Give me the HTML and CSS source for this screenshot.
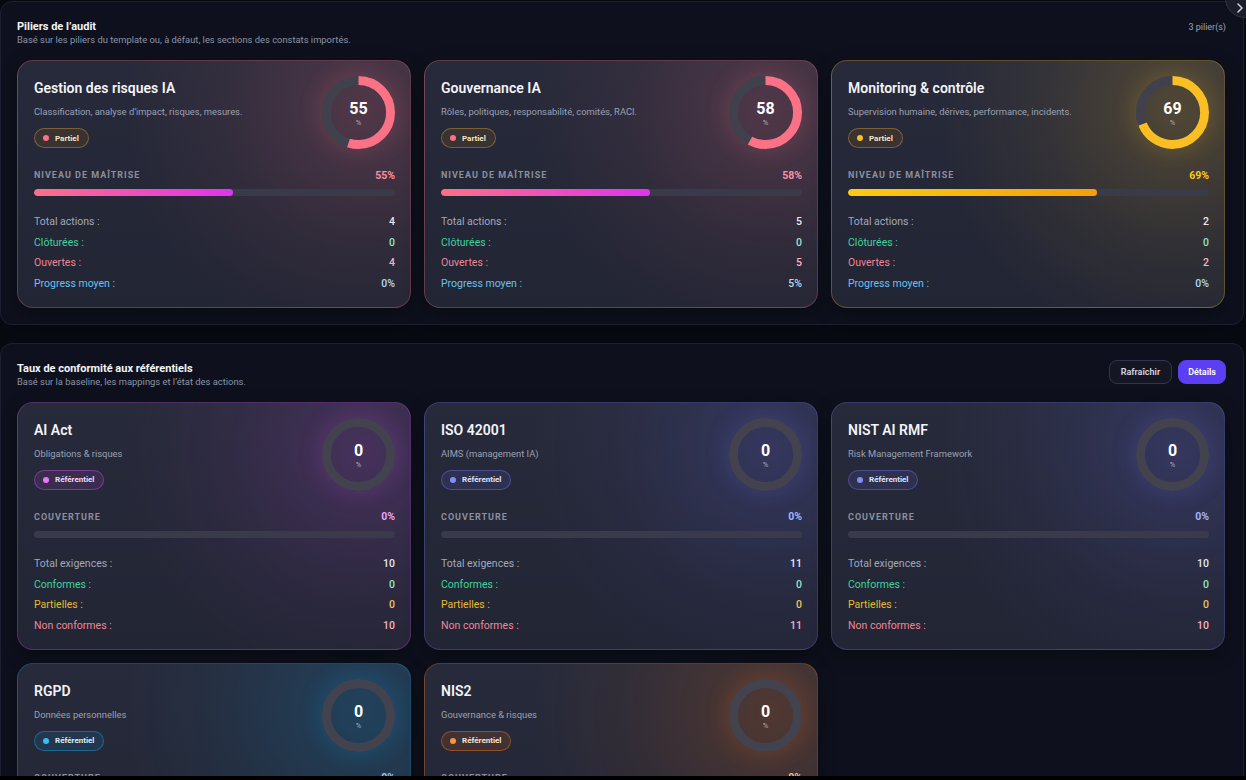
FILE: index.html
```html
<!DOCTYPE html>
<html lang="fr">
<head>
<meta charset="utf-8">
<title>Audit</title>
<link rel="stylesheet" href="styles.css">
</head>
<body>
<div class="viewport">
  <div class="fab"><svg width="10" height="10" viewBox="0 0 10 10"><path d="M3 1 L7 5 L3 9" fill="none" stroke="#c9ccd8" stroke-width="1.6" stroke-linecap="round" stroke-linejoin="round"/></svg></div>

  <section class="panel">
    <header class="panel-head">
      <div>
        <h2 class="panel-title">Piliers de l’audit</h2>
        <p class="panel-sub">Basé sur les piliers du template ou, à défaut, les sections des constats importés.</p>
      </div>
      <span class="panel-count">3 pilier(s)</span>
    </header>
    <div class="grid">
      <article class="card acc-rose">
        <div class="card-head">
          <div class="card-info">
            <h3 class="card-title">Gestion des risques IA</h3>
            <p class="card-desc">Classification, analyse d’impact, risques, mesures.</p>
            <span class="badge badge-partiel"><i class="dot dot-rose"></i>Partiel</span>
          </div>
          <div class="ring">
            <svg viewBox="0 0 74 74"><circle class="track" cx="37" cy="37" r="32.5"/><circle class="arc" cx="37" cy="37" r="32.5" style="stroke-dasharray:112.3 204.2"/></svg>
            <div class="ring-val"><b>55</b><span>%</span></div>
          </div>
        </div>
        <div class="meter-head"><span class="meter-label">Niveau de maîtrise</span><span class="meter-val">55%</span></div>
        <div class="bar"><div class="bar-fill" style="width:55%"></div></div>
        <ul class="stats">
          <li class="st-total"><span>Total actions :</span><b>4</b></li>
          <li class="st-green"><span>Clôturées :</span><b>0</b></li>
          <li class="st-red"><span>Ouvertes :</span><b>4</b></li>
          <li class="st-blue"><span>Progress moyen :</span><b>0%</b></li>
        </ul>
      </article>

      <article class="card acc-rose">
        <div class="card-head">
          <div class="card-info">
            <h3 class="card-title">Gouvernance IA</h3>
            <p class="card-desc">Rôles, politiques, responsabilité, comités, RACI.</p>
            <span class="badge badge-partiel"><i class="dot dot-rose"></i>Partiel</span>
          </div>
          <div class="ring">
            <svg viewBox="0 0 74 74"><circle class="track" cx="37" cy="37" r="32.5"/><circle class="arc" cx="37" cy="37" r="32.5" style="stroke-dasharray:118.4 204.2"/></svg>
            <div class="ring-val"><b>58</b><span>%</span></div>
          </div>
        </div>
        <div class="meter-head"><span class="meter-label">Niveau de maîtrise</span><span class="meter-val">58%</span></div>
        <div class="bar"><div class="bar-fill" style="width:58%"></div></div>
        <ul class="stats">
          <li class="st-total"><span>Total actions :</span><b>5</b></li>
          <li class="st-green"><span>Clôturées :</span><b>0</b></li>
          <li class="st-red"><span>Ouvertes :</span><b>5</b></li>
          <li class="st-blue"><span>Progress moyen :</span><b>5%</b></li>
        </ul>
      </article>

      <article class="card acc-amber">
        <div class="card-head">
          <div class="card-info">
            <h3 class="card-title">Monitoring &amp; contrôle</h3>
            <p class="card-desc">Supervision humaine, dérives, performance, incidents.</p>
            <span class="badge badge-partiel"><i class="dot dot-amber"></i>Partiel</span>
          </div>
          <div class="ring">
            <svg viewBox="0 0 74 74"><circle class="track" cx="37" cy="37" r="32.5"/><circle class="arc" cx="37" cy="37" r="32.5" style="stroke-dasharray:140.9 204.2"/></svg>
            <div class="ring-val"><b>69</b><span>%</span></div>
          </div>
        </div>
        <div class="meter-head"><span class="meter-label">Niveau de maîtrise</span><span class="meter-val">69%</span></div>
        <div class="bar"><div class="bar-fill" style="width:69%"></div></div>
        <ul class="stats">
          <li class="st-total"><span>Total actions :</span><b>2</b></li>
          <li class="st-green"><span>Clôturées :</span><b>0</b></li>
          <li class="st-red"><span>Ouvertes :</span><b>2</b></li>
          <li class="st-blue"><span>Progress moyen :</span><b>0%</b></li>
        </ul>
      </article>
    </div>
  </section>

  <section class="panel">
    <header class="panel-head">
      <div>
        <h2 class="panel-title">Taux de conformité aux référentiels</h2>
        <p class="panel-sub">Basé sur la baseline, les mappings et l’état des actions.</p>
      </div>
      <div class="actions">
        <button class="btn btn-ghost">Rafraîchir</button>
        <button class="btn btn-primary">Détails</button>
      </div>
    </header>
    <div class="grid">
      <article class="card acc-fuchsia">
        <div class="card-head">
          <div class="card-info">
            <h3 class="card-title">AI Act</h3>
            <p class="card-desc">Obligations &amp; risques</p>
            <span class="badge badge-ref"><i class="dot"></i>Référentiel</span>
          </div>
          <div class="ring ring-empty">
            <svg viewBox="0 0 74 74"><circle class="track" cx="37" cy="37" r="32.5"/></svg>
            <div class="ring-val"><b>0</b><span>%</span></div>
          </div>
        </div>
        <div class="meter-head"><span class="meter-label">Couverture</span><span class="meter-val">0%</span></div>
        <div class="bar"></div>
        <ul class="stats">
          <li class="st-total"><span>Total exigences :</span><b>10</b></li>
          <li class="st-green"><span>Conformes :</span><b>0</b></li>
          <li class="st-yellow"><span>Partielles :</span><b>0</b></li>
          <li class="st-red"><span>Non conformes :</span><b>10</b></li>
        </ul>
      </article>

      <article class="card acc-indigo">
        <div class="card-head">
          <div class="card-info">
            <h3 class="card-title">ISO 42001</h3>
            <p class="card-desc">AIMS (management IA)</p>
            <span class="badge badge-ref"><i class="dot"></i>Référentiel</span>
          </div>
          <div class="ring ring-empty">
            <svg viewBox="0 0 74 74"><circle class="track" cx="37" cy="37" r="32.5"/></svg>
            <div class="ring-val"><b>0</b><span>%</span></div>
          </div>
        </div>
        <div class="meter-head"><span class="meter-label">Couverture</span><span class="meter-val">0%</span></div>
        <div class="bar"></div>
        <ul class="stats">
          <li class="st-total"><span>Total exigences :</span><b>11</b></li>
          <li class="st-green"><span>Conformes :</span><b>0</b></li>
          <li class="st-yellow"><span>Partielles :</span><b>0</b></li>
          <li class="st-red"><span>Non conformes :</span><b>11</b></li>
        </ul>
      </article>

      <article class="card acc-indigo">
        <div class="card-head">
          <div class="card-info">
            <h3 class="card-title">NIST AI RMF</h3>
            <p class="card-desc">Risk Management Framework</p>
            <span class="badge badge-ref"><i class="dot"></i>Référentiel</span>
          </div>
          <div class="ring ring-empty">
            <svg viewBox="0 0 74 74"><circle class="track" cx="37" cy="37" r="32.5"/></svg>
            <div class="ring-val"><b>0</b><span>%</span></div>
          </div>
        </div>
        <div class="meter-head"><span class="meter-label">Couverture</span><span class="meter-val">0%</span></div>
        <div class="bar"></div>
        <ul class="stats">
          <li class="st-total"><span>Total exigences :</span><b>10</b></li>
          <li class="st-green"><span>Conformes :</span><b>0</b></li>
          <li class="st-yellow"><span>Partielles :</span><b>0</b></li>
          <li class="st-red"><span>Non conformes :</span><b>10</b></li>
        </ul>
      </article>

      <article class="card acc-sky">
        <div class="card-head">
          <div class="card-info">
            <h3 class="card-title">RGPD</h3>
            <p class="card-desc">Données personnelles</p>
            <span class="badge badge-ref"><i class="dot"></i>Référentiel</span>
          </div>
          <div class="ring ring-empty">
            <svg viewBox="0 0 74 74"><circle class="track" cx="37" cy="37" r="32.5"/></svg>
            <div class="ring-val"><b>0</b><span>%</span></div>
          </div>
        </div>
        <div class="meter-head"><span class="meter-label">Couverture</span><span class="meter-val">0%</span></div>
        <div class="bar"></div>
        <ul class="stats">
          <li class="st-total"><span>Total exigences :</span><b>10</b></li>
          <li class="st-green"><span>Conformes :</span><b>0</b></li>
          <li class="st-yellow"><span>Partielles :</span><b>0</b></li>
          <li class="st-red"><span>Non conformes :</span><b>10</b></li>
        </ul>
      </article>

      <article class="card acc-orange">
        <div class="card-head">
          <div class="card-info">
            <h3 class="card-title">NIS2</h3>
            <p class="card-desc">Gouvernance &amp; risques</p>
            <span class="badge badge-ref"><i class="dot"></i>Référentiel</span>
          </div>
          <div class="ring ring-empty">
            <svg viewBox="0 0 74 74"><circle class="track" cx="37" cy="37" r="32.5"/></svg>
            <div class="ring-val"><b>0</b><span>%</span></div>
          </div>
        </div>
        <div class="meter-head"><span class="meter-label">Couverture</span><span class="meter-val">0%</span></div>
        <div class="bar"></div>
        <ul class="stats">
          <li class="st-total"><span>Total exigences :</span><b>10</b></li>
          <li class="st-green"><span>Conformes :</span><b>0</b></li>
          <li class="st-yellow"><span>Partielles :</span><b>0</b></li>
          <li class="st-red"><span>Non conformes :</span><b>10</b></li>
        </ul>
      </article>
    </div>
  </section>
</div>
</body>
</html>
```
FILE: styles.css
```css
* { box-sizing: border-box; }
html, body { margin: 0; padding: 0; background: #000; }
body {
  font-family: Roboto, "Liberation Sans", sans-serif;
  color: #e5e7eb;
  overflow: hidden;
}
.viewport {
  position: relative;
  height: 776px;
  overflow: hidden;
  background: #070911;
  padding: 1px 2px 0 0;
  display: flex;
  flex-direction: column;
  gap: 18px;
}
.fab {
  position: absolute;
  top: -22px;
  right: -19px;
  width: 40px;
  height: 40px;
  border-radius: 50%;
  background: #1b1e2a;
  border: 1px solid #2f3344;
  display: flex;
  align-items: flex-end;
  justify-content: flex-start;
  padding: 0 0 4px 9px;
  z-index: 2;
}
.panel {
  flex-shrink: 0;
  background: #0e111d;
  border: 1px solid #1c2031;
  border-radius: 12px;
  padding: 17px 17px 16px 16px;
}
.panel-head {
  display: flex;
  justify-content: space-between;
  align-items: flex-start;
  margin-bottom: 14px;
}
.panel-title {
  margin: 0;
  font-size: 11px;
  line-height: 14px;
  font-weight: 700;
  color: #f3f4f8;
  padding-top: 1px;
}
.panel-sub {
  margin: 0;
  font-size: 9.4px;
  line-height: 12px;
  color: #8c93a7;
}
.panel-count {
  font-size: 9px;
  line-height: 14px;
  color: #9da3b4;
  padding-top: 1px;
}
.actions { display: flex; gap: 6px; margin-top: -1px; }
.btn {
  font-family: inherit;
  font-size: 9px;
  font-weight: 600;
  height: 24px;
  border-radius: 8px;
  padding: 0 11px;
  cursor: pointer;
}
.btn-ghost {
  background: #141723;
  border: 1px solid #31354a;
  color: #d4d7e1;
}
.btn-primary {
  background: #5a3ff3;
  border: 1px solid #5a3ff3;
  color: #fff;
  padding: 0 9px;
}
.grid {
  display: grid;
  grid-template-columns: repeat(3, 394px);
  gap: 13px;
}
.card {
  --acc: 251, 113, 133;
  border-radius: 16px;
  border: 1px solid rgba(var(--acc), 0.28);
  background:
    radial-gradient(circle at 88% 20%, rgba(var(--acc), 0.20), rgba(var(--acc), 0.06) 35%, transparent 60%),
    linear-gradient(180deg, #272a3a, #222534);
  padding: 15px 15px 12px 16px;
  box-shadow: 0 6px 18px rgba(0, 0, 0, 0.35);
}
.acc-rose { --acc: 251, 113, 133; --c1: #fb7185; --c2: #e033f0; --val: #fb8fa2; }
.acc-amber { --acc: 251, 191, 36; --c1: #facc15; --c2: #f59e0b; --val: #facc15; }
.acc-fuchsia { --acc: 200, 80, 230; --dot: #e879f9; --val: #e9a3f5; --btext: #f1d9f8; }
.acc-indigo { --acc: 110, 110, 240; --dot: #818cf8; --val: #a5b4fc; --btext: #dfe2fb; }
.acc-sky { --acc: 14, 165, 233; --dot: #38bdf8; --val: #7dd3fc; --btext: #d8eefb; }
.acc-orange { --acc: 249, 115, 22; --dot: #fb923c; --val: #fdba74; --btext: #fbe3cf; }

.card-head {
  display: flex;
  justify-content: space-between;
  align-items: flex-start;
  height: 73px;
}
.card-info { padding-top: 3px; }
.card-title {
  margin: 0;
  font-size: 14px;
  line-height: 18px;
  font-weight: 600;
  color: #f3f4f7;
}
.card-desc {
  margin: 9px 0 0;
  font-size: 9.4px;
  line-height: 12px;
  color: #9aa1b4;
}
.badge {
  display: inline-flex;
  align-items: center;
  gap: 6px;
  height: 20px;
  margin-top: 10px;
  padding: 0 9px 0 8px;
  border-radius: 10px;
  font-size: 8px;
  font-weight: 700;
}
.badge-partiel {
  background: rgba(110, 80, 35, 0.28);
  border: 1px solid rgba(190, 140, 60, 0.5);
  color: #f5e6c0;
}
.badge-ref {
  background: rgba(var(--acc), 0.13);
  border: 1px solid rgba(var(--acc), 0.45);
  color: var(--btext);
}
.dot {
  width: 6px;
  height: 6px;
  border-radius: 50%;
  background: var(--dot);
}
.dot-rose { background: #fb7185; }
.dot-amber { background: #fbbf24; }

.ring {
  position: relative;
  width: 73px;
  height: 73px;
  border-radius: 50%;
  box-shadow: 0 0 26px rgba(var(--acc), 0.22);
}
.ring svg { width: 73px; height: 73px; display: block; transform: rotate(-90deg); }
.track { fill: none; stroke: #41414e; stroke-width: 9; }
.ring-empty .track { stroke: #42434f; }
.arc { fill: none; stroke: var(--c1); stroke-width: 9; }
.acc-amber .arc { stroke: #fbbf24; }
.ring-val {
  position: absolute;
  inset: 0;
  display: flex;
  flex-direction: column;
  align-items: center;
  justify-content: center;
  padding-top: 2px;
}
.ring-val b { font-size: 16px; line-height: 17px; font-weight: 700; color: #fff; }
.ring-val span { font-size: 7.5px; line-height: 9px; color: #a9acb8; margin-top: 1px; }

.meter-head {
  display: flex;
  justify-content: space-between;
  align-items: center;
  margin-top: 20px;
  height: 12px;
}
.meter-label {
  font-size: 9px;
  font-weight: 700;
  letter-spacing: 1px;
  text-transform: uppercase;
  color: #8b8f9f;
}
.meter-val { font-size: 10.5px; font-weight: 700; color: var(--val); }
.bar {
  height: 7px;
  margin-top: 8px;
  border-radius: 4px;
  background: #393b4a;
  overflow: hidden;
}
.bar-fill {
  height: 100%;
  border-radius: 4px;
  background: linear-gradient(90deg, var(--c1), var(--c2));
}
.stats {
  list-style: none;
  margin: 16px 0 0;
  padding: 0;
}
.stats li {
  display: flex;
  justify-content: space-between;
  font-size: 10.5px;
  line-height: 20.7px;
}
.stats b { font-weight: 500; }
.st-total span { color: #a2a8bb; }
.st-total b { color: #e6e8ef; }
.st-green span { color: #3fd39c; }
.st-green b { color: #93e5c3; }
.st-red span { color: #f18595; }
.st-red b { color: #f7b4bf; }
.st-blue span { color: #6cc0ee; }
.st-blue b { color: #b3daf1; }
.st-yellow span { color: #e5bb33; }
.st-yellow b { color: #e8c75c; }
```
